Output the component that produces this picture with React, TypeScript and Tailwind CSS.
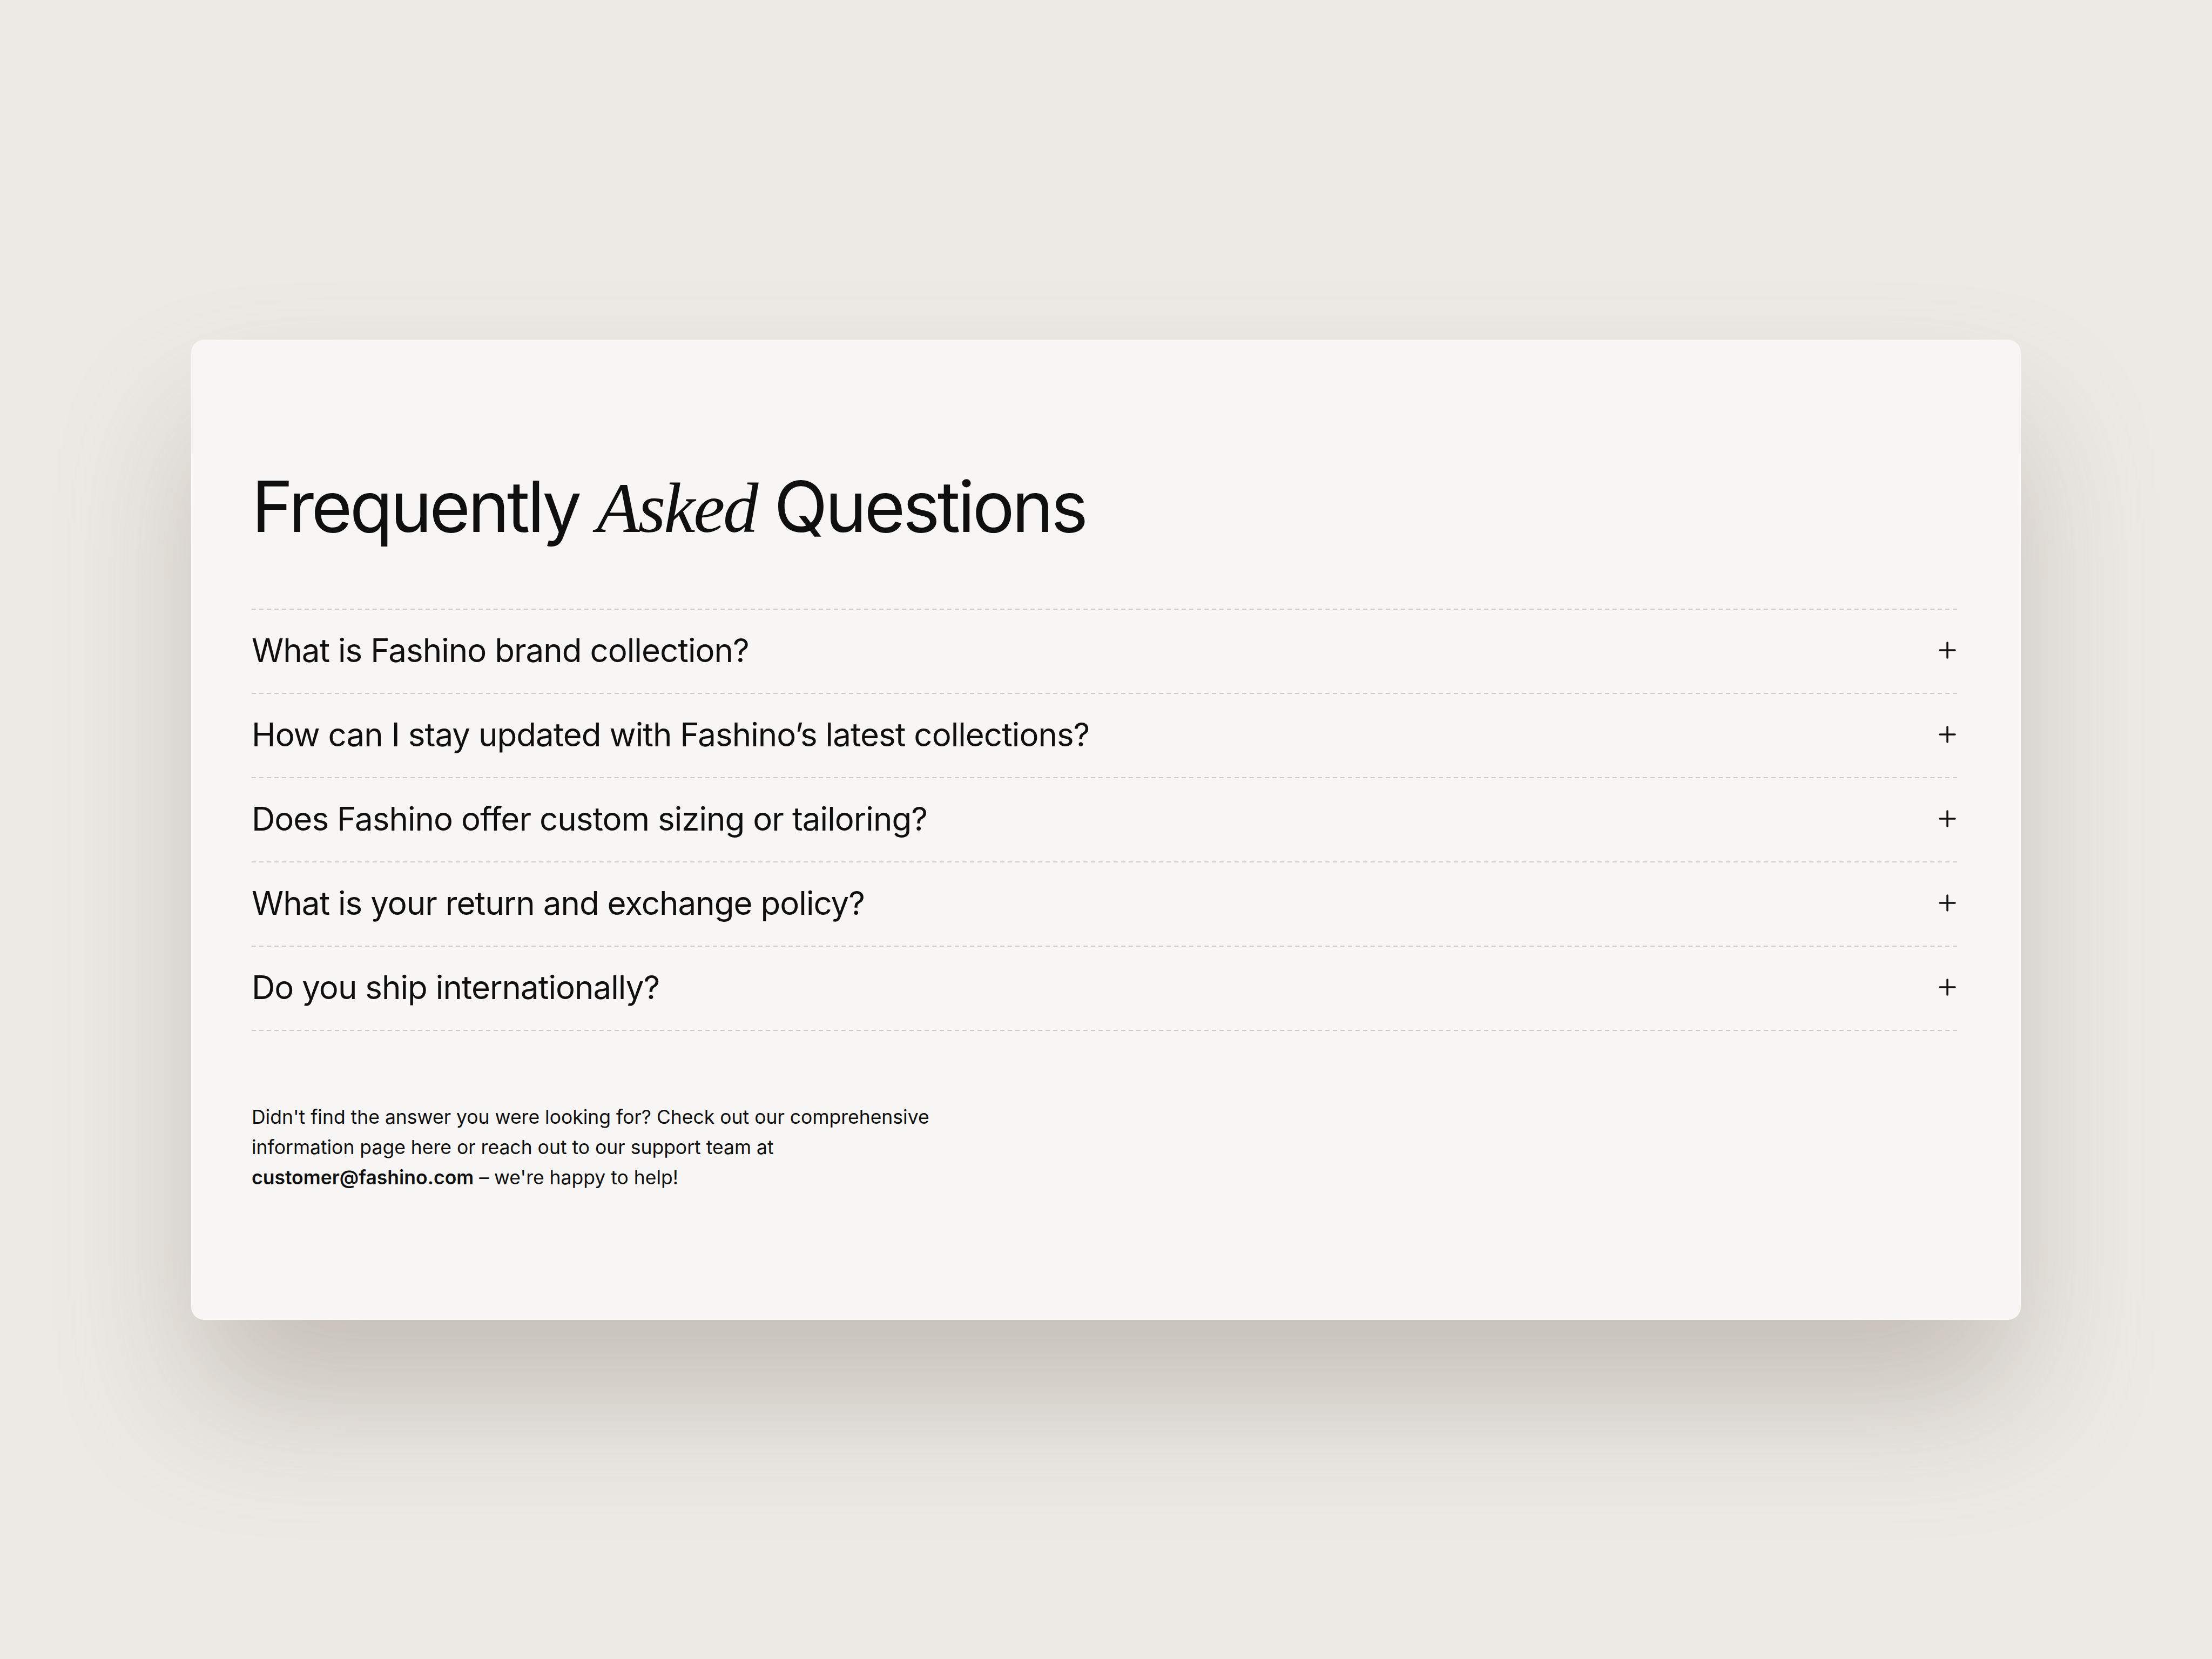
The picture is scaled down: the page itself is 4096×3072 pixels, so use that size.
const questions = [
  "What is Fashino brand collection?",
  "How can I stay updated with Fashino’s latest collections?",
  "Does Fashino offer custom sizing or tailoring?",
  "What is your return and exchange policy?",
  "Do you ship internationally?",
];

function Divider() {
  return (
    <div className="h-[2px] w-full bg-[linear-gradient(to_right,#cbcbc9_8px,transparent_8px)] bg-[length:14px_2px] bg-repeat-x" />
  );
}

function PlusIcon() {
  return (
    <svg width="32" height="32" viewBox="0 0 32 32" fill="none" className="text-[#111]">
      <path d="M16 2v28M2 16h28" stroke="currentColor" strokeWidth="3.5" strokeLinecap="round" />
    </svg>
  );
}

export default function App() {
  return (
    <div className="flex h-[3072px] w-[4096px] items-center justify-center bg-[#EDEAE6] font-['Inter',sans-serif] text-[#0f0f0f]">
      <div className="w-[3388px] rounded-[24px] bg-[#F7F6F4] px-[112px] pt-[244px] pb-[235px] shadow-[0_150px_260px_-10px_rgba(110,100,80,0.32)]">
        <h2 className="text-[130px] leading-none tracking-[-0.035em]">
          Frequently{" "}
          <span className="font-['Liberation_Serif',serif] text-[131px] italic leading-none tracking-[-0.025em]">
            Asked
          </span>{" "}
          Questions
        </h2>

        <div className="mt-[121px]">
          {questions.map((q) => (
            <div key={q}>
              <Divider />
              <button className="flex h-[154px] w-full items-center justify-between pr-[8px] pb-[4px] text-left">
                <span className="text-[60px] tracking-[-0.016em]">{q}</span>
                <PlusIcon />
              </button>
            </div>
          ))}
          <Divider />
        </div>

        <p className="mt-[132px] text-[35.5px] leading-[56px]">
          Didn't find the answer you were looking for? Check out our comprehensive
          <br />
          information page here or reach out to our support team at
          <br />
          <span className="font-semibold">customer@fashino.com</span> – we're happy to help!
        </p>
      </div>
    </div>
  );
}
